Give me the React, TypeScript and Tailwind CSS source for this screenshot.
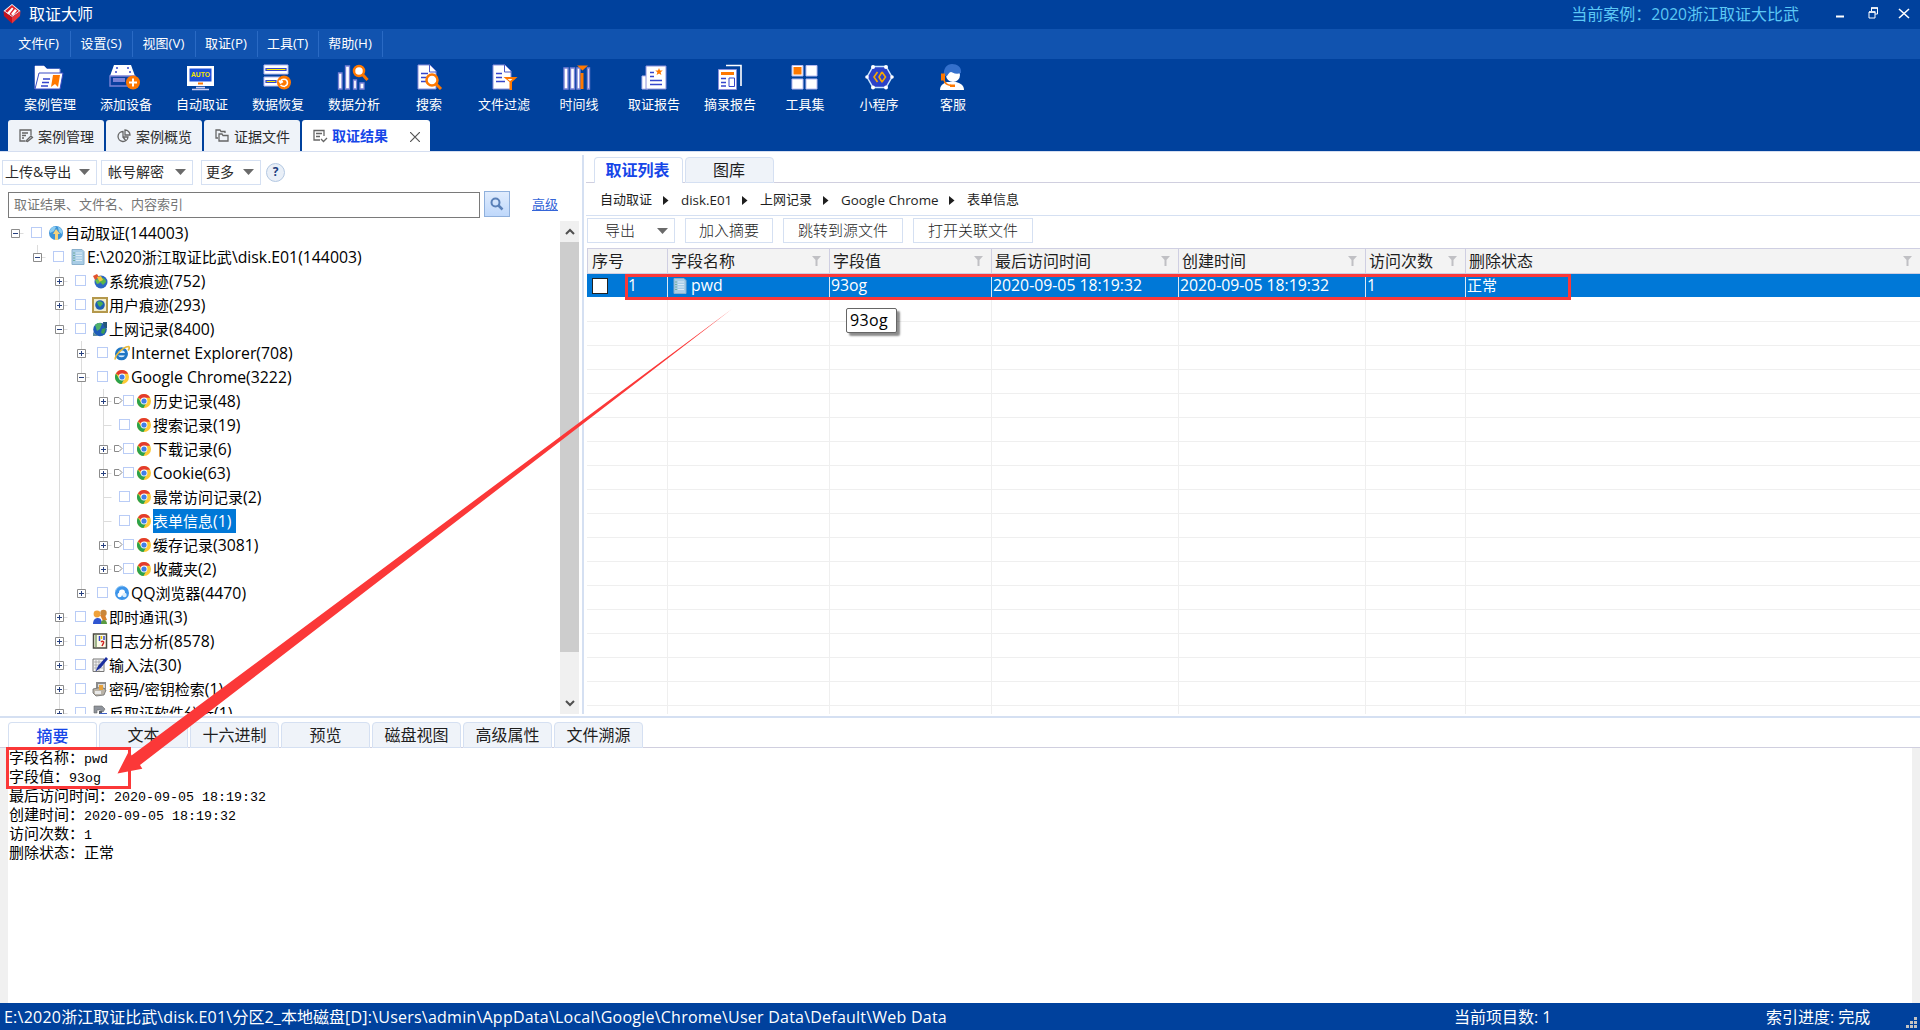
import React from "react";

/* ---------- text helper: Latin runs are set in their own size ---------- */
function Mixed({ text, latin }: { text: string; latin: string }) {
  const runs = text.match(/[\x20-\x7e]+|[^\x20-\x7e]+/g) ?? [];
  return (
    <span className="whitespace-pre">
      {runs.map((r, i) =>
        /^[\x20-\x7e]/.test(r) ? (
          <span key={i} className={latin}>{r}</span>
        ) : (
          <React.Fragment key={i}>{r}</React.Fragment>
        )
      )}
    </span>
  );
}

/* ---------- toolbar icons ---------- */
const tool: Record<string, React.ReactNode> = {
  case: (
    <>
      <path d="M1 25V2h9l3 3h13v6" fill="#fff" stroke="#8a90dc" />
      <path d="M1 25V2h9l3 3h12v20z" fill="#fff" />
      <path d="M5 9h24l-3 16H1z" fill="#fff" stroke="#3a4cc4" />
      <path d="M9 15h7M8 18.5h7M7 22h7" stroke="#3546cc" strokeWidth="1.6" />
      <path d="M19 11h7l-2 12-3-3-4 3z" fill="#ff7800" />
    </>
  ),
  device: (
    <>
      <path d="M5 1h17l4 11H1z" fill="#fff" />
      <path d="M7 4h2M18 4h2M6 8h2M20 8h2" stroke="#3546cc" strokeWidth="1.6" />
      <path d="M1 12h25v10H1z" fill="#0a3f9f" stroke="#7b83d6" strokeWidth="1.4" />
      <path d="M4 16h12" stroke="#7b83d6" strokeWidth="4" />
      <circle cx="24" cy="18.5" r="7" fill="#ff7800" />
      <path d="M24 14.5v8M20 18.5h8" stroke="#fff" strokeWidth="2" />
    </>
  ),
  auto: (
    <>
      <path d="M1 2h27v20H1z" fill="#fff" />
      <path d="M3.5 4.5h22v13h-22z" fill="#1a4fd8" />
      <text x="14.5" y="13" textAnchor="middle" fontSize="6.5" fontWeight="700" fill="#f6e600" fontFamily="Liberation Sans" textLength="19" lengthAdjust="spacingAndGlyphs">AUTO</text>
      <path d="M12 19.5h5" stroke="#ff7800" strokeWidth="2" />
      <path d="M10 23.5h9M6 25.5h17" stroke="#c9cdf5" strokeWidth="1.3" />
    </>
  ),
  restore: (
    <>
      <path d="M2 1h24v9H2zM2 13h16v9H2z" fill="#fff" stroke="#b6baf0" />
      <path d="M4 4.500h20v2H4zM4 16.500h10v2H4z" fill="#f6e600" stroke="#3546cc" strokeWidth="1.2" />
      <circle cx="22" cy="18.5" r="7" fill="#ff7800" />
      <path d="M18.500 18a3.500 3.500 0 1 1 4.500 4M23 22.500c-2 0-3 0-4.500-1.500M17 16.500l1.500 2.500 2.500-1.500" stroke="#fff" strokeWidth="1.5" fill="none" />
    </>
  ),
  analyse: (
    <>
      <path d="M1.500 9h3.500v16H1.500zM8.500 2h4v23h-4zM16.500 16h3v9h-3zM23 19h4v6h-4z" fill="#fff" stroke="#7b83d6" strokeWidth="1.3" />
      <circle cx="22" cy="7" r="5" fill="#fff" stroke="#ff7800" strokeWidth="2.5" />
      <path d="M26 11l4.500 5" stroke="#ff7800" strokeWidth="3" />
    </>
  ),
  search: (
    <>
      <path d="M3 1h12l6 6v18H3z" fill="#fff" stroke="#8a90dc" />
      <path d="M14.500 1v7H21" fill="none" stroke="#4b59c8" />
      <path d="M6 9.500h7M6 13.500h6M6 17.500h6" stroke="#3546cc" strokeWidth="1.6" />
      <circle cx="17" cy="16" r="5.5" fill="#fff" stroke="#ff7800" strokeWidth="2.5" />
      <path d="M21 20l5 5" stroke="#ff7800" strokeWidth="3" />
    </>
  ),
  filter: (
    <>
      <path d="M3 1h12l6 6v18H3z" fill="#fff" stroke="#8a90dc" />
      <path d="M14.500 1v7H21" fill="none" stroke="#4b59c8" />
      <path d="M6 9.500h6M6 13.500h6M6 17.500h9" stroke="#3546cc" strokeWidth="1.6" />
      <path d="M13.500 13h14l-5.500 5v8h-2.500v-8z" fill="#ff7800" />
      <path d="M17.500 15h5l-2.500 2z" fill="#fff" />
    </>
  ),
  timeline: (
    <>
      <path d="M2 4h4v21H2zM8.500 4h4v21h-4zM15 4h3v21h-3zM25.500 4h2v21h-2z" fill="#fff" stroke="#7b83d6" strokeWidth="1.4" />
      <path d="M15 1.500h11l-5.500 5z" fill="#ff7800" />
      <path d="M18.500 9h3v16h-3z" fill="#ff7800" />
    </>
  ),
  report: (
    <>
      <path d="M8 12H3v13h6" fill="#fff" stroke="#b6baf0" />
      <path d="M8 2h19v23H7V2z" fill="#fff" stroke="#8a90dc" />
      <path d="M20 4l1 2.500 2.800.100-2.200 1.700.800 2.700L20 9.500 17.600 11l.800-2.700-2.200-1.700 2.800-.100z" fill="#ff7800" />
      <path d="M11 8.500h4M11 12.500h4M11 16.500h12M11 20.500h12" stroke="#3546cc" strokeWidth="1.6" />
    </>
  ),
  excerpt: (
    <>
      <path d="M10 1.500h15V22" fill="none" stroke="#fff" strokeWidth="1.6" />
      <path d="M2.500 5.500h18v20h-18z" fill="#fff" stroke="#8a90dc" />
      <path d="M5 8h13v3H5z" fill="#ff7800" />
      <path d="M5 14.500h5M5 18.500h5M5 22h5" stroke="#3546cc" strokeWidth="1.6" />
      <path d="M13 14h5.500v8.500H13z" fill="#fff" stroke="#3546cc" />
    </>
  ),
  tools: (
    <>
      <path d="M2 1.500h11v10.500H2zM16 1.500h11v10.500H16zM2 15h11v10H2zM16 15h11v10H16z" fill="#fff" stroke="#b6baf0" />
      <path d="M3.500 3h8v7.500h-8z" fill="#ff7800" />
    </>
  ),
  mini: (
    <>
      <path d="M8 2.500h13l6 10.500-6 10.500H8L2 13z" fill="#2b42c8" stroke="#c9e6ff" strokeWidth="1.5" />
      <g fill="#fff"><circle cx="8" cy="3" r="2" /><circle cx="21" cy="3" r="2" /><circle cx="27" cy="13" r="1.8" /><circle cx="21" cy="23.5" r="2" /><circle cx="8" cy="23.5" r="2" /><circle cx="2" cy="13" r="1.8" /></g>
      <path d="M12.500 8L9 13l3.500 5M17 8l-3 5 3 5M17 8l3.500 5-3.500 5" fill="none" stroke="#f7a700" strokeWidth="1.6" />
    </>
  ),
  service: (
    <>
      <path d="M3 26c0-5 4-7 7-8h9c4 1 8 3 8 8z" fill="#fff" />
      <circle cx="16" cy="11" r="7" fill="#fff" />
      <path d="M7 12C6 4 10 0 15 0s10 3 9 9c-6 2-9-1-10-1-2 0-3 3-4 4z" fill="#3470cc" />
      <path d="M4 9.500h4v7H4z" fill="#ff7800" />
      <path d="M7 16c1 4 3 5 7 5.500" fill="none" stroke="#ff7800" strokeWidth="1.4" />
      <path d="M13 20.500h5v2.500h-5z" fill="#ff7800" />
    </>
  ),
};

const tools = [
  { k: "case", t: "案例管理", w: "w-[76px]", m: "-ml-1" },
  { k: "device", t: "添加设备", w: "w-[76px]", m: "-ml-1.5" },
  { k: "auto", t: "自动取证", w: "w-[76px]", m: "-ml-1" },
  { k: "restore", t: "数据恢复", w: "w-[76px]", m: "-ml-[3px]" },
  { k: "analyse", t: "数据分析", w: "w-[76px]", m: "-ml-1.5" },
  { k: "search", t: "搜索", w: "w-[74px]", m: "ml-0" },
  { k: "filter", t: "文件过滤", w: "w-[76px]", m: "ml-0" },
  { k: "timeline", t: "时间线", w: "w-[74px]", m: "-ml-[5px]" },
  { k: "report", t: "取证报告", w: "w-[76px]", m: "-ml-0.5" },
  { k: "excerpt", t: "摘录报告", w: "w-[76px]", m: "ml-0" },
  { k: "tools", t: "工具集", w: "w-[74px]", m: "-ml-px" },
  { k: "mini", t: "小程序", w: "w-[74px]", m: "ml-0" },
  { k: "service", t: "客服", w: "w-[74px]", m: "-ml-1" },
];

const menus = [
  { t: "文件(F)", w: "w-[63px]" },
  { t: "设置(S)", w: "w-[62px]" },
  { t: "视图(V)", w: "w-[63px]" },
  { t: "取证(P)", w: "w-[62px]" },
  { t: "工具(T)", w: "w-[61px]" },
  { t: "帮助(H)", w: "w-[64px]" },
];

/* ---------- tree icons ---------- */
const Chrome = () => (
  <svg width="16" height="16" viewBox="0 0 16 16">
    <circle cx="8" cy="8" r="7" fill="#fcc934" />
    <path d="M8 8L1.900 4.500A7 7 0 0 1 14.100 4.700H8z" fill="#e33b2e" />
    <path d="M8 8L5.200 9.700 1.900 4.500A7 7 0 0 0 7.500 15l3-5.400z" fill="#2ba24c" />
    <circle cx="8" cy="8" r="3.4" fill="#fff" />
    <circle cx="8" cy="8" r="2.6" fill="#3f7fe8" />
  </svg>
);

const treeIcons: Record<string, React.ReactNode> = {
  chrome: <Chrome />,
  root: (
    <svg width="16" height="16" viewBox="0 0 16 16">
      <circle cx="8" cy="8" r="7" fill="#3d94d8" />
      <path d="M2 5c2-4 5-4 6-3L6 6 2 8zM10 2c4 1 5 5 4 7l-3-2z" fill="#8ccdf2" />
      <path d="M8 4l4 5h-2v6H7V9H5z" fill="#f8d27a" />
    </svg>
  ),
  file: (
    <svg width="16" height="16" viewBox="0 0 16 16">
      <path d="M2 .500h10l2 2V15.500H2z" fill="#a9cde6" stroke="#8ab0cc" />
      <path d="M6 4h6M6 6.500h6M6 9h6M6 11.500h6" stroke="#dcecf7" />
      <path d="M3.500 4h1M3.500 6.500h1M3.500 9h1M3.500 11.500h1" stroke="#3c8f5a" />
    </svg>
  ),
  system: (
    <svg width="16" height="16" viewBox="0 0 16 16">
      <circle cx="9" cy="9" r="6.500" fill="#2b66c4" />
      <path d="M8 5c3-1 6 1 6 4l-3 3-3-3z" fill="#58b54a" />
      <path d="M1 3l4-2 2 3-4 3z" fill="#e2532f" />
      <path d="M5 4l4-1 2 4-4 2z" fill="#f3c63c" />
      <path d="M3 7l3-1 2 4-3 1z" fill="#6cc24a" />
    </svg>
  ),
  user: (
    <svg width="16" height="16" viewBox="0 0 16 16">
      <path d="M1 1h14v14H1z" fill="#f2edcc" stroke="#b4984c" strokeWidth="2" />
      <circle cx="8" cy="8" r="4.8" fill="#1e5eb4" />
      <path d="M5 5c3-2 6 0 6 2L8 10 6 8z" fill="#4cae54" />
    </svg>
  ),
  net: (
    <svg width="16" height="16" viewBox="0 0 16 16">
      <circle cx="8" cy="8.500" r="6.800" fill="#1d5cb8" />
      <path d="M3 4c3-3 6-2 7-1L8 8l-3 2z" fill="#4fb06a" />
      <path d="M10 8l4-1-2 6-3-1z" fill="#3b9c54" />
      <path d="M11 1h4v6c-2 0-4-2-4-6z" fill="#25567a" />
      <path d="M1 11l5 4H1z" fill="#5f8d9c" />
    </svg>
  ),
  ie: (
    <svg width="16" height="16" viewBox="0 0 16 16">
      <circle cx="7.500" cy="8.800" r="5" fill="#d8ecfa" stroke="#1f76c4" strokeWidth="3" />
      <path d="M4 9.200h9" stroke="#1f76c4" strokeWidth="2.400" />
      <path d="M1.500 14.500C0 12 8 2 14.500 1.500c1.500 1 .500 3-.500 4" fill="none" stroke="#e9b93a" strokeWidth="1.700" />
    </svg>
  ),
  qq: (
    <svg width="16" height="16" viewBox="0 0 16 16">
      <circle cx="8" cy="8" r="7" fill="#3d95ea" />
      <path d="M1.500 6A7 7 0 0 1 9 1" fill="none" stroke="#8fc8f5" />
      <circle cx="8" cy="7.500" r="3" fill="#fff" />
      <circle cx="5.700" cy="10" r="2.200" fill="#fff" />
      <circle cx="10.500" cy="10" r="2.200" fill="#dceefb" />
    </svg>
  ),
  im: (
    <svg width="16" height="16" viewBox="0 0 16 16">
      <circle cx="5" cy="5" r="3.400" fill="#f0a23a" />
      <circle cx="11.500" cy="4" r="3.200" fill="#c9863a" />
      <path d="M8 6h5l2 5-4 1z" fill="#d8822e" />
      <path d="M1 15c0-4 2-6 5-6s4 3 4 6z" fill="#2f55d0" />
      <path d="M9 15c0-3 1-4 3-4s3 2 3 4z" fill="#5a9b40" />
    </svg>
  ),
  log: (
    <svg width="16" height="16" viewBox="0 0 16 16">
      <path d="M1.500 1h13v14h-13z" fill="#fdfbe8" stroke="#4a4a40" strokeWidth="1.500" />
      <path d="M3 2h2v12H3z" fill="#9fb58a" />
      <path d="M7.500 3v5M12 3v4" stroke="#3546cc" strokeWidth="1.500" />
      <path d="M9 9c1-1 3-1 2.500 1L10 13" stroke="#c22" strokeWidth="1.500" fill="none" />
      <path d="M9.500 3v3" stroke="#e8c000" strokeWidth="1.500" />
    </svg>
  ),
  ime: (
    <svg width="16" height="16" viewBox="0 0 16 16">
      <path d="M1 2h11v12.500H1z" fill="#f4f4f4" stroke="#777" />
      <path d="M2 5h9M2 8h9M2 11h9M4 3v11M7 3v11" stroke="#999" strokeWidth=".7" />
      <path d="M14 0l2 2-7 8.500L3.500 14.500 6 9z" fill="#1b2f9f" />
    </svg>
  ),
  key: (
    <svg width="16" height="16" viewBox="0 0 16 16">
      <path d="M4 1h10v7H4z" fill="#8c8c8c" />
      <path d="M6 3h7v4H6z" fill="#dcdcdc" />
      <path d="M1 8l9-2 4 3-2 5-8 1-3-3z" fill="#b9b3a8" stroke="#6a6a6a" strokeWidth=".8" />
      <path d="M7 4h4v5H7z" fill="#e6a23c" />
      <path d="M3 10h6v3H3z" fill="#e9e9e9" />
    </svg>
  ),
  anti: (
    <svg width="16" height="16" viewBox="0 0 16 16">
      <path d="M2 1h8l3 3-2 3-3-2H5v3H2z" fill="#8f949c" stroke="#666" strokeWidth=".6" />
      <path d="M7 6h3v10H7z" fill="#555c66" />
      <path d="M8 8h7v7H8z" fill="#3c5fc4" />
    </svg>
  ),
};

type Row = {
  l: number;
  t: string;
  i: string;
  e?: "+" | "-";
  g?: number[];
  mark?: boolean;
  end?: boolean;
  sel?: boolean;
};

const tree: Row[] = [
  { l: 0, t: "自动取证(144003)", i: "root", e: "-" },
  { l: 1, t: "E:\\2020浙江取证比武\\disk.E01(144003)", i: "file", e: "-", end: true },
  { l: 2, t: "系统痕迹(752)", i: "system", e: "+" },
  { l: 2, t: "用户痕迹(293)", i: "user", e: "+" },
  { l: 2, t: "上网记录(8400)", i: "net", e: "-" },
  { l: 3, t: "Internet Explorer(708)", i: "ie", e: "+", g: [2] },
  { l: 3, t: "Google Chrome(3222)", i: "chrome", e: "-", g: [2] },
  { l: 4, t: "历史记录(48)", i: "chrome", e: "+", g: [2, 3], mark: true },
  { l: 4, t: "搜索记录(19)", i: "chrome", g: [2, 3] },
  { l: 4, t: "下载记录(6)", i: "chrome", e: "+", g: [2, 3], mark: true },
  { l: 4, t: "Cookie(63)", i: "chrome", e: "+", g: [2, 3], mark: true },
  { l: 4, t: "最常访问记录(2)", i: "chrome", g: [2, 3] },
  { l: 4, t: "表单信息(1)", i: "chrome", g: [2, 3], sel: true },
  { l: 4, t: "缓存记录(3081)", i: "chrome", e: "+", g: [2, 3], mark: true },
  { l: 4, t: "收藏夹(2)", i: "chrome", e: "+", g: [2, 3], mark: true, end: true },
  { l: 3, t: "QQ浏览器(4470)", i: "qq", e: "+", g: [2], end: true },
  { l: 2, t: "即时通讯(3)", i: "im", e: "+" },
  { l: 2, t: "日志分析(8578)", i: "log", e: "+" },
  { l: 2, t: "输入法(30)", i: "ime", e: "+" },
  { l: 2, t: "密码/密钥检索(1)", i: "key", e: "+" },
  { l: 2, t: "反取证软件分析(1)", i: "anti", e: "+" },
];

function TreeRow({ r }: { r: Row }) {
  return (
    <div className="flex h-6 shrink-0 items-center pl-1">
      {Array.from({ length: r.l }, (_, i) => (
        <div key={i} className="flex h-6 w-[22px] justify-center pl-px">
          {r.g?.includes(i) && <div className="h-6 w-px bg-[#dcdcdc]" />}
        </div>
      ))}
      <svg className="shrink-0" width="22" height="24" viewBox="0 0 22 24">
        {r.l > 0 && <path d={r.end ? "M11.500 0v12" : "M11.500 0v24"} stroke="#dcdcdc" />}
        <path d="M11.500 12.500h8" stroke="#dcdcdc" />
        {r.e && <path d="M7.500 8.500h8v8h-8z" fill="#fff" stroke="#8c8c8c" />}
        {r.e && <path d="M9 12.500h5" stroke="#27407f" />}
        {r.e === "+" && <path d="M11.500 10v5" stroke="#27407f" />}
      </svg>
      {r.mark && (
        <svg className="shrink-0" width="9" height="8" viewBox="0 0 9 8">
          <path d="M.500 .500h4.500l3 3-3 3H.500z" fill="#fff" stroke="#8a8a8a" />
        </svg>
      )}
      <div
        className={
          "mb-px size-[11px] shrink-0 border border-[#b9ccf6] bg-white " +
          (r.mark ? "mr-0.5" : "mr-1.5 ml-[5px]")
        }
      />
      <div className="mb-px mr-px size-4 shrink-0">{treeIcons[r.i]}</div>
      <div
        className={
          "h-6 text-[15px] leading-[25px] " +
          (r.sel ? "bg-[#0078d7] pr-[5px] text-white" : "text-black")
        }
      >
        <Mixed text={r.t} latin="text-[15.8px]" />
      </div>
    </div>
  );
}

const Caret = () => (
  <svg className="shrink-0" width="11" height="6" viewBox="0 0 11 6">
    <path d="M0 0h11L5.500 6z" fill="#6a6a6a" />
  </svg>
);

const Funnel = () => (
  <svg className="shrink-0" width="9" height="10" viewBox="0 0 9 10">
    <path d="M0 0h9L5.500 4v6h-2V4z" fill="#c0c0c4" />
  </svg>
);

const cols = [
  { t: "序号", w: "w-[80px]", v: "", f: false },
  { t: "字段名称", w: "w-[162px]", v: "pwd", f: true },
  { t: "字段值", w: "w-[162px]", v: "93og", f: true },
  { t: "最后访问时间", w: "w-[187px]", v: "2020-09-05 18:19:32", f: true },
  { t: "创建时间", w: "w-[187px]", v: "2020-09-05 18:19:32", f: true },
  { t: "访问次数", w: "w-[100px]", v: "1", f: true },
  { t: "删除状态", w: "flex-1", v: "正常", f: true },
];

const topTabs = [
  {
    t: "案例管理",
    w: "w-[96px]",
    icon: <path d="M12 6V1H1v11h5M3 4h6M3 6.500h4M3 9h2M7 12l5-5 1.500 1.500-5 4z" />,
  },
  {
    t: "案例概览",
    w: "w-[96px]",
    icon: <path d="M6 2.500A5 5 0 1 0 11 8H6zM8 1v5h5A5 5 0 0 0 8 1zM6 8l3 4" />,
  },
  {
    t: "证据文件",
    w: "w-[96px]",
    icon: <path d="M3 9H1V1h4l1 1.500h4V4M4 5h3l1 1.500h5V12H4z" />,
  },
];

const bottomTabs = ["摘要", "文本", "十六进制", "预览", "磁盘视图", "高级属性", "文件溯源"];

const detail = [
  "字段名称：pwd",
  "字段值：93og",
  "最后访问时间：2020-09-05 18:19:32",
  "创建时间：2020-09-05 18:19:32",
  "访问次数：1",
  "删除状态：正常",
];

const crumbs = [
  { t: "自动取证", w: "w-[81px]" },
  { t: "disk.E01", w: "w-[79px]" },
  { t: "上网记录", w: "w-[81px]" },
  { t: "Google Chrome", w: "w-[126px]" },
  { t: "表单信息", w: "" },
];

export default function App() {
  return (
    <div className="relative flex h-[1030px] w-[1920px] flex-col overflow-hidden bg-white font-['Open_Sans','Noto_Sans_CJK_SC',sans-serif] text-[#1e1e1e]">
      {/* title bar */}
      <div className="flex h-[29px] shrink-0 items-center bg-[#00419d] text-white">
        <svg className="-mt-0.5 ml-[3px]" width="18" height="20" viewBox="0 0 18 20">
          <path d="M9 0l8.500 7L9 13 .500 7z" fill="#fff" />
          <path d="M9 1l7 6-7 5-7-5z" fill="#e0222c" />
          <path d="M.500 7L9 13v6.500L1 12z" fill="#c3121e" />
          <path d="M17.500 7L9 13v6.500L17 12z" fill="#e8343a" />
          <path d="M4 9l5-5.500 1.500 1-4.500 6zM8 10l4-5 2 1.500-4 5z" fill="#fff" />
        </svg>
        <span className="ml-2 text-[16px] leading-[29px]">取证大师</span>
        <span className="ml-auto text-[16px] leading-[29px] text-[#5cc8f5]">
          <Mixed text="当前案例：2020浙江取证大比武" latin="text-[15.6px]" />
        </span>
        <svg className="-mt-1 ml-[37px]" width="84" height="20" viewBox="0 0 84 20" fill="none" stroke="#fff">
          <path d="M0 13.500h8" strokeWidth="2" />
          <path d="M35.500 8V5h6v6h-2.500M33 9h6v6h-6z" strokeWidth="1" />
          <path d="M35 5h7M33 9h6.500" strokeWidth="1.5" />
          <path d="M63 6l10 9M73 6l-10 9" strokeWidth="1.6" />
        </svg>
      </div>

      {/* menu bar */}
      <div className="flex h-[30px] shrink-0 items-center bg-[#1153af] pl-2 text-[13px] text-white">
        {menus.map((m) => (
          <div key={m.t} className={"flex h-[26px] items-center justify-center border-r border-[#2a6ac4] pr-px " + m.w}>
            <Mixed text={m.t} latin="text-[13.3px]" />
          </div>
        ))}
      </div>

      {/* tool bar */}
      <div className="flex h-[61px] shrink-0 bg-[#00419d] pl-3 text-white">
        {tools.map((x) => (
          <div key={x.k} className={"flex flex-col items-center pt-[5px] " + x.w}>
            <svg className={"overflow-visible " + x.m} width="29" height="27" viewBox="0 0 29 27" fill="none">
              {tool[x.k]}
            </svg>
            <span className="mt-[3px] text-[13px] leading-5">{x.t}</span>
          </div>
        ))}
      </div>

      {/* document tabs */}
      <div className="flex h-[31px] shrink-0 items-stretch gap-0.5 bg-[#00419d] pl-2">
        {topTabs.map((x) => (
          <div key={x.t} className={"flex items-center rounded-t-[3px] bg-[#eff3f9] pt-px pl-[11px] text-[14px] text-[#2b2b2b] " + x.w}>
            <svg className="mr-1 shrink-0" width="15" height="14" viewBox="0 0 15 14" fill="none" stroke="#666" strokeWidth="1.3">
              {x.icon}
            </svg>
            <span>{x.t}</span>
          </div>
        ))}
        <div className="flex w-[128px] items-center rounded-t-[3px] bg-white pl-[11px] text-[14px] font-bold text-[#1646e8]">
          <svg className="mr-1 shrink-0" width="15" height="14" viewBox="0 0 15 14" fill="none" stroke="#666" strokeWidth="1.3">
            <path d="M11 7V1.500H1V11h6M3 4.500h6M3 7.500h4M8 10l2.500 2.500L14 9" />
          </svg>
          <span className="-mt-px">取证结果</span>
          <svg className="mt-0.5 ml-[22px]" width="10" height="10" viewBox="0 0 10 10" stroke="#555" strokeWidth="1.2">
            <path d="M0 0l10 10M10 0L0 10" />
          </svg>
        </div>
      </div>

      {/* main area */}
      <div className="flex h-[565px] shrink-0 border-t border-[#d5def0]">
        <div className="flex w-[582px] shrink-0 flex-col pt-[7px]">
          <div className="flex h-[26px] shrink-0 items-center text-[14px] leading-5 text-[#2b2b2b]">
            <div className="ml-0.5 flex h-[25px] w-[95px] items-center justify-between border border-[#d5e0f2] pr-1.5 pl-0.5">
              <Mixed text="上传&导出" latin="text-[14px]" />
              <Caret />
            </div>
            <div className="ml-1 flex h-[25px] w-[92px] items-center justify-between border border-[#d5e0f2] pr-1.5 pl-1.5">
              帐号解密
              <Caret />
            </div>
            <div className="ml-2 flex h-[25px] w-[60px] items-center justify-between border border-[#d5e0f2] pr-1.5 pl-1">
              更多
              <Caret />
            </div>
            <div className="ml-[5px] flex size-[19px] items-center justify-center rounded-full border border-[#b3c8e2] bg-[#e9eff7] text-[12px] font-bold text-[#1c3c7c]">
              ?
            </div>
          </div>
          <div className="mt-1.5 flex h-[27px] shrink-0 items-center">
            <div className="mt-px ml-2 h-[26px] w-[472px] border border-[#7a7a7a] pl-[5px] text-[13px] leading-[23px] text-[#757575]">
              取证结果、文件名、内容索引
            </div>
            <div className="mb-px ml-1 flex size-[26px] items-center justify-center border border-[#8fb0dc] bg-gradient-to-b from-[#e0ecfd] to-[#bfd8fb]">
              <svg width="14" height="14" viewBox="0 0 14 14" fill="none" stroke="#5a80b8">
                <circle cx="5.500" cy="5.500" r="4" strokeWidth="2" />
                <path d="M8.500 8.500l4 4" strokeWidth="2.5" />
              </svg>
            </div>
            <span className="mb-0.5 ml-[22px] text-[13px] leading-5 text-[#3565d8] underline">高级</span>
          </div>
          <div className="mt-[3px] flex h-[493px] shrink-0">
            <div className="flex w-[560px] flex-col overflow-hidden">
              {tree.map((r) => (
                <TreeRow key={r.t} r={r} />
              ))}
            </div>
            <div className="flex w-[19px] flex-col bg-[#f0f0f0]">
              <div className="flex h-[21px] items-center justify-center">
                <svg width="10" height="7" viewBox="0 0 10 7" fill="none" stroke="#505050" strokeWidth="2">
                  <path d="M1 6l4-4 4 4" />
                </svg>
              </div>
              <div className="h-[410px] bg-[#cdcdcd]" />
              <div className="mt-auto flex h-[21px] items-center justify-center">
                <svg width="10" height="7" viewBox="0 0 10 7" fill="none" stroke="#505050" strokeWidth="2">
                  <path d="M1 1l4 4 4-4" />
                </svg>
              </div>
            </div>
          </div>
        </div>

        <div className="mt-[3px] mb-0.5 w-0.5 shrink-0 bg-[#d5e0f2]" />

        <div className="flex min-w-0 flex-1 flex-col pt-[5px]">
          <div className="flex h-[26px] shrink-0 items-end pl-0.5 text-[16px]">
            <div className="h-px w-2 bg-[#d0cfdf]" />
            <div className="flex h-[26px] w-[89px] items-center justify-center rounded-t-[4px] border border-b-0 border-[#d5e0f2] pr-0.5 pb-px font-bold text-[#1646e8]">
              取证列表
            </div>
            <div className="h-px w-0.5 bg-[#d0cfdf]" />
            <div className="flex h-[26px] w-[89px] items-center justify-center rounded-t-[4px] border border-[#d5e0f2] bg-[#eff3f9] pr-px">
              图库
            </div>
            <div className="h-px flex-1 bg-[#d0cfdf]" />
          </div>
          <div className="ml-0.5 flex h-[33px] shrink-0 items-center border-b border-[#d5e0f2] pt-0.5 pl-3.5 text-[13px]">
            {crumbs.map((c, i) => (
              <div key={c.t} className={"flex items-center justify-between " + c.w}>
                <Mixed text={c.t} latin="text-[13.400px]" />
                {i < 4 && (
                  <svg className="mr-3" width="6" height="9" viewBox="0 0 6 9">
                    <path d="M0 0l5.500 4.500L0 9z" fill="#1e1e1e" />
                  </svg>
                )}
              </div>
            ))}
          </div>
          <div className="mt-0.5 flex h-[25px] shrink-0 gap-2.5 pl-[3px] text-[15px] leading-[23px] font-light">
            <div className="flex w-[88px] items-center justify-between border border-[#d5e0f2] pr-1.5 pl-[17px]">
              导出
              <Caret />
            </div>
            <div className="w-[88px] border border-[#d5e0f2] text-center">加入摘要</div>
            <div className="w-[120px] border border-[#d5e0f2] text-center">跳转到源文件</div>
            <div className="w-[120px] border border-[#d5e0f2] text-center">打开关联文件</div>
          </div>
          <div className="mt-[5px] ml-[3px] flex h-[466px] shrink-0 flex-col overflow-hidden">
            <div className="flex h-[26px] shrink-0 border-y border-l border-[#cfcfe2] bg-[#f3f3f3] text-[16px] leading-6">
              {cols.map((c, i) => (
                <div
                  key={c.t}
                  className={
                    "flex items-center justify-between " + c.w +
                    (i === 0 ? " pl-1" : " pl-[3px]") +
                    (i < 6 ? " border-r border-[#cfcfe2] pr-2" : " pr-2")
                  }
                >
                  {c.t}
                  {c.f && <Funnel />}
                </div>
              ))}
            </div>
            <div className="mb-px flex h-[23px] shrink-0 bg-[#0078d7] pl-px text-[15px] leading-[25px] text-white">
              {cols.map((c, i) => (
                <div key={c.t} className={"flex items-center pl-px " + c.w + (i < 6 ? " border-r border-[#d8e8f6]" : "")}>
                  {i === 0 && (
                    <>
                      <div className="ml-[3px] size-4 border border-[#222] bg-white" />
                      <span className="ml-[20px] text-[15.8px]">1</span>
                    </>
                  )}
                  {i === 1 && <div className="mr-[3px] ml-[3px] size-4">{treeIcons.file}</div>}
                  <Mixed text={c.v} latin="text-[15.8px]" />
                </div>
              ))}
            </div>
            {Array.from({ length: 18 }, (_, r) => (
              <div key={r} className="flex h-6 shrink-0 border-b border-[#efefef] pl-px">
                {cols.map((c, i) => (
                  <div key={c.t} className={c.w + (i < 6 ? " border-r border-[#efefef]" : "")} />
                ))}
              </div>
            ))}
          </div>
        </div>
      </div>

      {/* detail pane */}
      <div className="flex h-8 shrink-0 items-end border-t-2 border-[#d5e0f2] text-[16px] leading-6">
        <div className="h-px w-2 bg-[#d0cfdf]" />
        {bottomTabs.map((t, i) => (
          <React.Fragment key={t}>
            <div
              className={
                "flex h-[26px] w-[89px] items-center justify-center rounded-t-[4px] border border-[#d5e0f2] " +
                (i === 0 ? "border-b-0 font-medium text-[#1646e8]" : "bg-[#eff3f9]")
              }
            >
              {t}
            </div>
            <div className="h-px w-0.5 bg-[#d0cfdf]" />
          </React.Fragment>
        ))}
        <div className="h-px flex-1 bg-[#d0cfdf]" />
      </div>
      <div className="h-[255px] shrink-0 border-x-8 border-[#f0f0f0] bg-white pl-px text-[15px] text-black">
        {detail.map((d) => (
          <div key={d} className="h-[19px] leading-[19px]">
            <Mixed text={d} latin="font-['Liberation_Mono',monospace] text-[13.33px]" />
          </div>
        ))}
      </div>

      {/* status bar */}
      <div className="flex h-[27px] shrink-0 items-center bg-[#00419d] pt-0.5 pl-1 text-[16px] leading-[27px] text-white">
        <div className="w-[1450px]">
          <Mixed text={"E:\\2020浙江取证比武\\disk.E01\\分区2_本地磁盘[D]:\\Users\\admin\\AppData\\Local\\Google\\Chrome\\User Data\\Default\\Web Data"} latin="text-[16px] tracking-[0.225px]" />
        </div>
        <div className="w-[312px]">当前项目数: 1</div>
        <div>索引进度: 完成</div>
        <svg className="mt-2.5 ml-auto mr-[3px]" width="11" height="11" viewBox="0 0 11 11" fill="#c4c4c4">
          <path d="M8 0h3v3H8zM4 4h3v3H4zM8 4h3v3H8zM0 8h3v3H0zM4 8h3v3H4zM8 8h3v3H8z" />
        </svg>
      </div>

      {/* value tooltip */}
      <div className="absolute top-[308px] left-[846px] h-[25px] w-[51px] rounded-[2px] border border-[#666] bg-white pl-[3px] text-[16px] leading-[23px] tracking-[0.4px] text-black shadow-[3px_3px_2px_rgba(0,0,0,0.45)]">
        93og
      </div>

      {/* annotations */}
      <div className="absolute top-[274px] left-[625px] h-[26px] w-[946px] border-[3px] border-[#fb3838]" />
      <div className="absolute top-[747px] left-[6px] h-[42px] w-[125px] border-[3px] border-[#fb3838]" />
      <svg className="pointer-events-none absolute top-0 left-0" width="1920" height="1030" viewBox="0 0 1920 1030">
        <path d="M732 309L131.500 755.500L129.500 750L117.500 773.500L142.300 768.700L140 765Z" fill="#fb3838" />
      </svg>
    </div>
  );
}
